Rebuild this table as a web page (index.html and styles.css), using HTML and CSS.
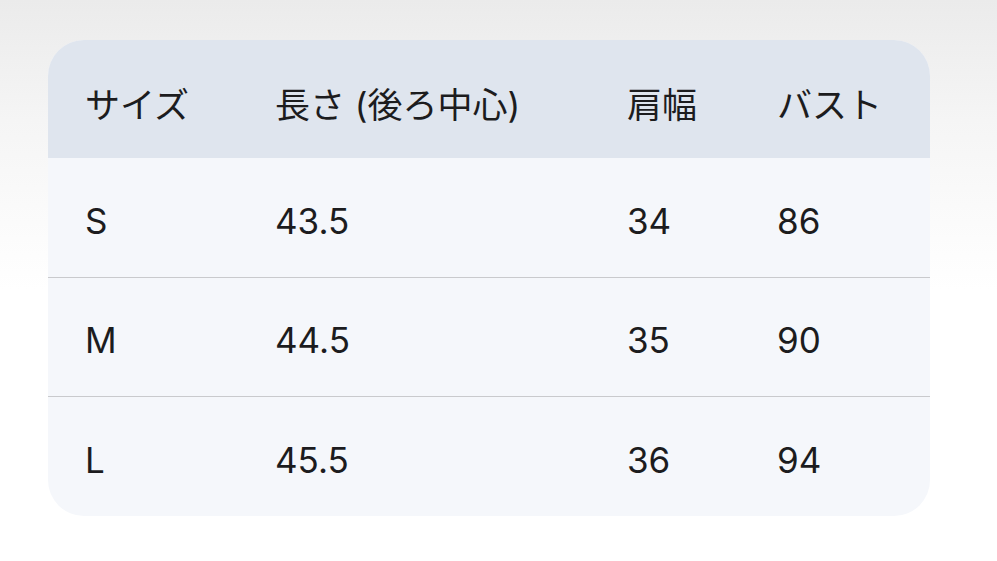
FILE: index.html
```html
<!DOCTYPE html>
<html lang="ja">
<head>
<meta charset="utf-8">
<link rel="stylesheet" href="styles.css">
</head>
<body>
<div class="page">
  <div class="card">
    <div class="row head">
      <div class="cell">サイズ</div>
      <div class="cell">長さ (後ろ中心)</div>
      <div class="cell">肩幅</div>
      <div class="cell">バスト</div>
    </div>
    <div class="row">
      <div class="cell">S</div>
      <div class="cell">43.5</div>
      <div class="cell">34</div>
      <div class="cell">86</div>
    </div>
    <div class="row">
      <div class="cell">M</div>
      <div class="cell">44.5</div>
      <div class="cell">35</div>
      <div class="cell">90</div>
    </div>
    <div class="row last">
      <div class="cell">L</div>
      <div class="cell">45.5</div>
      <div class="cell">36</div>
      <div class="cell">94</div>
    </div>
  </div>
</div>
</body>
</html>
```
FILE: styles.css
```css
html, body {
  margin: 0;
  padding: 0;
}
body {
  width: 997px;
  height: 561px;
  overflow: hidden;
  background: linear-gradient(to bottom, #ebebeb 0px, #f5f5f5 120px, #ffffff 290px);
  font-family: "Inter", "Noto Sans CJK JP", sans-serif;
  color: #1c1c1e;
}
.page {
  padding: 40px 67px 0 48px;
}
.card {
  width: 882px;
  border-radius: 36px;
  overflow: hidden;
  background: #f5f7fb;
}
.row {
  display: grid;
  grid-template-columns: 190px 352px 150px 1fr;
  box-sizing: border-box;
  height: 119px;
  align-items: center;
  font-size: 35px;
  border-top: 1px solid #c9cacd;
}
.row.head {
  height: 118px;
  border-top: none;
  background: #dfe5ee;
}
.row.head + .row {
  border-top: none;
}
.row.last {
  height: 120px;
}
.cell {
  padding-left: 37px;
  padding-top: 6px;
  white-space: nowrap;
}
```
